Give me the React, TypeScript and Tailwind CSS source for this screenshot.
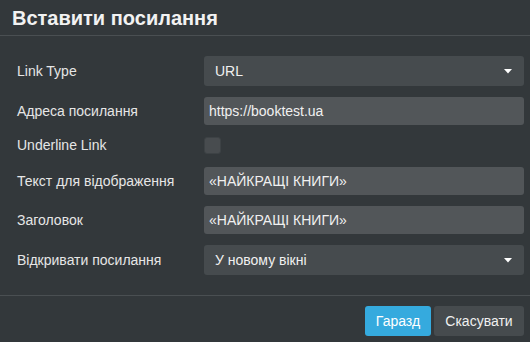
import React from 'react';

const Caret = () => (
  <svg width="8" height="5" viewBox="0 0 8 5" className="shrink-0">
    <path d="M0 0h8L4 4.5z" fill="#ffffff" />
  </svg>
);

const Label: React.FC<{ children: React.ReactNode }> = ({ children }) => (
  <div className="w-[187px] shrink-0 text-[14px] text-[#e6e6e6]">{children}</div>
);

const Select: React.FC<{ value: string }> = ({ value }) => (
  <div className="flex h-[30px] flex-1 items-center justify-between rounded-[3px] bg-[#464b4e] pl-[11px] pr-[12px] text-[14px] text-[#f0f0f0]">
    <span>{value}</span>
    <Caret />
  </div>
);

const Input: React.FC<{ value: string }> = ({ value }) => (
  <div className="flex h-[28px] flex-1 items-center rounded-[3px] bg-[#525659] px-[5px] text-[14px] text-[#f0f0f0]">
    {value}
  </div>
);

export default function App() {
  return (
    <div
      className="flex h-[342px] w-[530px] flex-col bg-[#33383b]"
      style={{ fontFamily: '"Liberation Sans", Arial, sans-serif' }}
    >
      <div className="flex h-[36px] items-center border-b border-[#4a4f52] px-[12px]">
        <h2 className="text-[20px] font-bold text-[#f2f2f2]">Вставити посилання</h2>
      </div>

      <div className="flex flex-col px-[17px] pr-[6px] pt-[20px]">
        <div className="flex items-center">
          <Label>Link Type</Label>
          <Select value="URL" />
        </div>
        <div className="mt-[11px] flex items-center">
          <Label>Адреса посилання</Label>
          <Input value="https://booktest.ua" />
        </div>
        <div className="mt-[10px] flex items-center">
          <Label>Underline Link</Label>
          <div className="h-[17px] w-[17px] rounded-[3px] border border-[#3d4245] bg-[#484c4f]" />
        </div>
        <div className="mt-[11px] flex items-center">
          <Label>Текст для відображення</Label>
          <Input value="«НАЙКРАЩІ КНИГИ»" />
        </div>
        <div className="mt-[11px] flex items-center">
          <Label>Заголовок</Label>
          <Input value="«НАЙКРАЩІ КНИГИ»" />
        </div>
        <div className="mt-[11px] flex items-center">
          <Label>Відкривати посилання</Label>
          <Select value="У новому вікні" />
        </div>
      </div>

      <div className="mt-[20px] flex items-center justify-end gap-[3px] border-t border-[#4a4f52] px-[6px] pt-[10px]">
        <button className="h-[30px] w-[66px] rounded-[3px] bg-[#35aade] text-[14px] text-white">Гаразд</button>
        <button className="h-[30px] w-[90px] rounded-[3px] bg-[#464b4e] text-[14px] text-[#f0f0f0]">Скасувати</button>
      </div>
    </div>
  );
}
